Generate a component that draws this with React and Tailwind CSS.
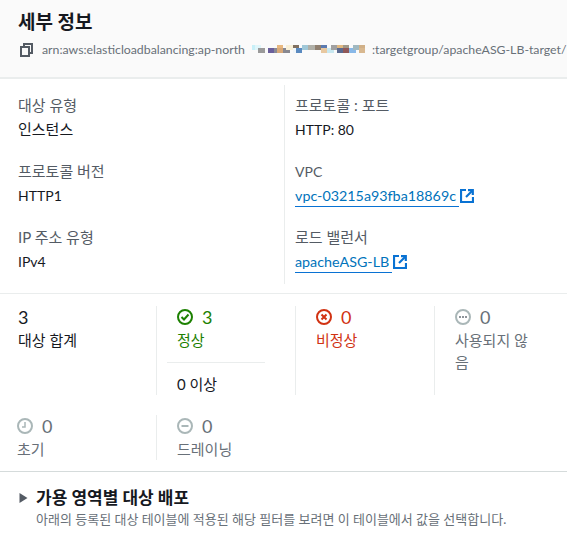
const FONT = "font-['Lato','Noto_Sans_CJK_KR',sans-serif]";

function Ext() {
  return (
    <svg width="14" height="14" viewBox="0 0 14 14" fill="none" className="ml-[1px] shrink-0" stroke="#0972d3" strokeWidth="2.2">
      <path d="M6 1H1V13H13V8" />
      <path d="M6 8L12 2" />
      <path d="M8 1.2H12.8V6" />
    </svg>
  );
}

function Field({ label, children, className = "", ko = false, koValue = false }) {
  return (
    <div className={className}>
      <div className={`h-[24px] text-[#545b64] ${ko ? "text-[15px] leading-[22px]" : "leading-[24px]"}`}>{label}</div>
      <div className={`h-[24px] text-[#16191f] ${koValue ? "text-[15px] leading-[22px]" : "leading-[24px]"}`}>{children}</div>
    </div>
  );
}

function LinkField({ label, text, uw, ko }) {
  return (
    <Field label={label} ko={ko} className="mt-[18px]">
      <span className="flex items-center">
        <span className={`${uw} h-[23px] border-b border-[#0972d3] text-[14.3px] text-[#0073bb]`}>{text}</span>
        <Ext />
      </span>
    </Field>
  );
}

const mosaic = [
  [0,1,"#c8f0f8"],[1,1,"#e0f6fa"],[2,2,"#9a9a9a"],[5,2,"#6a5f9c"],[7,2,"#8a8a94"],[8,1,"#e8b880"],[8,2,"#d8a878"],[10,2,"#888890"],[11,1,"#f8f0d8"],[13,1,"#807060"],[13,2,"#f0f6fa"],[14,2,"#5a8ac0"],[16,1,"#a0c8d8"],[18,1,"#b0b0a8"],[20,1,"#908070"],[22,1,"#5a7ab0"],[22,2,"#e8c8a0"],[24,2,"#c8e8f0"],[25,1,"#a0a0a0"],[27,1,"#e0b880"],[27,2,"#5a6a90"],[29,1,"#a09888"],[29,2,"#905858"],[31,2,"#88b8e8"],[32,1,"#a0b8c0"],[34,1,"#d0b088"],[34,2,"#d8b890"],
];

function Mosaic() {
  return (
    <svg width="127" height="22" viewBox="0 0 36 7" className="shrink-0" shapeRendering="crispEdges">
      {mosaic.map(([x, y, c], i) => (
        <rect key={i} x={x} y={y + 1} width="2" height="1.6" fill={c} />
      ))}
    </svg>
  );
}

function Stat({ icon, value, label, color, children }) {
  return (
    <div className="w-[139px] border-r border-[#eaeded] pl-[20px]">
      <div className="flex h-[22px] items-center leading-[22px]">
        {icon}
        <span className={`ml-[9px] text-[18px] ${color}`}>{value}</span>
      </div>
      <div className={`mt-[1px] text-[15px] leading-[22px] ${color}`}>{label}</div>
      {children}
    </div>
  );
}

const Circle = ({ c, children }) => (
  <svg width="16" height="16" viewBox="0 0 16 16" fill="none" stroke={c} strokeWidth="2" className="shrink-0">
    <circle cx="8" cy="8" r="7" />
    {children}
  </svg>
);

export default function App() {
  return (
    <div className={`h-[535px] w-[567px] overflow-hidden bg-white text-[14px] ${FONT}`}>
      <div className="h-[79px] border-b-2 border-[#eaeded] bg-[#fafafa] pl-[18px] pt-[9px]">
        <h2 className="h-[26px] text-[19px] font-bold leading-[26px] text-[#16191f]">세부 정보</h2>
        <div className="ml-[2px] mt-[4px] flex h-[22px] items-center whitespace-nowrap text-[12.3px] leading-[22px] text-[#687078]">
          <svg width="13" height="14" viewBox="0 0 13 14" fill="none" stroke="#545b64" strokeWidth="2" className="shrink-0">
            <rect x="1" y="4" width="8" height="9" />
            <path d="M4 3V1H12V10H10" />
          </svg>
          <span className="ml-[9px]">arn:aws:elasticloadbalancing:ap-north</span>
          <Mosaic />
          <span>:targetgroup/apacheASG-LB-target/</span>
        </div>
      </div>

      <div className="grid h-[215px] grid-cols-[285px_1fr] border-b border-[#eaeded] pt-[6px]">
        <div className="h-[199px] border-r border-[#eaeded] pl-[18px] pt-[9px]">
          <Field label="대상 유형" ko koValue>인스턴스</Field>
          <Field label="프로토콜 버전" ko className="mt-[18px]">HTTP1</Field>
          <Field label="IP 주소 유형" ko className="mt-[18px]">IPv4</Field>
        </div>
        <div className="pl-[10px] pt-[9px]">
          <Field label="프로토콜 : 포트" ko>HTTP: 80</Field>
          <LinkField label="VPC" text="vpc-03215a93fba18869c" uw="w-[164px]" />
          <LinkField label="로드 밸런서" ko text="apacheASG-LB" uw="w-[97px]" />
        </div>
      </div>

      <div className="mt-[12px] flex h-[89px] text-[#16191f]">
        <div className="w-[157px] border-r border-[#eaeded] pl-[18px]">
          <div className="h-[22px] text-[18px] leading-[22px]">3</div>
          <div className="mt-[1px] text-[15px] leading-[22px]">대상 합계</div>
        </div>
        <Stat
          value="3"
          label="정상"
          color="text-[#1d8102]"
          icon={
            <Circle c="#1d8102">
              <path d="M4.5 8L7 10.5L11.5 5.5" />
            </Circle>
          }
        >
          <div className="-ml-[10px] mt-[11px] w-[98px] border-t border-[#eaeded] pl-[10px] pt-[10px] text-[15px] leading-[22px] text-[#16191f]">0 이상</div>
        </Stat>
        <Stat
          value="0"
          label="비정상"
          color="text-[#d13212]"
          icon={
            <Circle c="#d13212">
              <path d="M5.5 5.5L10.5 10.5M10.5 5.5L5.5 10.5" />
            </Circle>
          }
        />
        <div className="w-[132px] pl-[20px] text-[#687078]">
          <div className="flex h-[22px] items-center">
            <Circle c="#aab7b8">
              <g fill="#687078" stroke="none">
                <circle cx="5" cy="8" r="1" />
                <circle cx="8" cy="8" r="1" />
                <circle cx="11" cy="8" r="1" />
              </g>
            </Circle>
            <span className="ml-[9px] text-[18px]">0</span>
          </div>
          <div className="mt-[1px] w-[84px] text-[15px] leading-[22px]">사용되지 않음</div>
        </div>
      </div>

      <div className="mt-[20px] flex h-[45px] text-[#687078]">
        <div className="w-[157px] border-r border-[#eaeded] pl-[17px]">
          <div className="flex h-[22px] items-center">
            <Circle c="#aab7b8">
              <path d="M8 4V9H5" strokeWidth="1.5" />
            </Circle>
            <span className="ml-[9px] text-[18px]">0</span>
          </div>
          <div className="mt-[1px] text-[15px] leading-[22px]">초기</div>
        </div>
        <div className="pl-[20px]">
          <div className="flex h-[22px] items-center">
            <Circle c="#aab7b8">
              <path d="M4.5 8H11.5" />
            </Circle>
            <span className="ml-[9px] text-[18px]">0</span>
          </div>
          <div className="mt-[1px] text-[15px] leading-[22px]">드레이닝</div>
        </div>
      </div>

      <div className="mt-[11px] border-t border-[#d5dbdb] pl-[19px] pt-[15px]">
        <div className="flex h-[22px] items-center">
          <svg width="9" height="10" viewBox="0 0 9 10" className="shrink-0">
            <path d="M0.5 0L8.5 5L0.5 10Z" fill="#545b64" />
          </svg>
          <span className="ml-[8px] text-[17px] font-bold leading-[22px] text-[#16191f]">가용 영역별 대상 배포</span>
        </div>
        <div className="ml-[17px] text-[13px] leading-[20px] text-[#687078]">아래의 등록된 대상 테이블에 적용된 해당 필터를 보려면 이 테이블에서 값을 선택합니다.</div>
      </div>
    </div>
  );
}
